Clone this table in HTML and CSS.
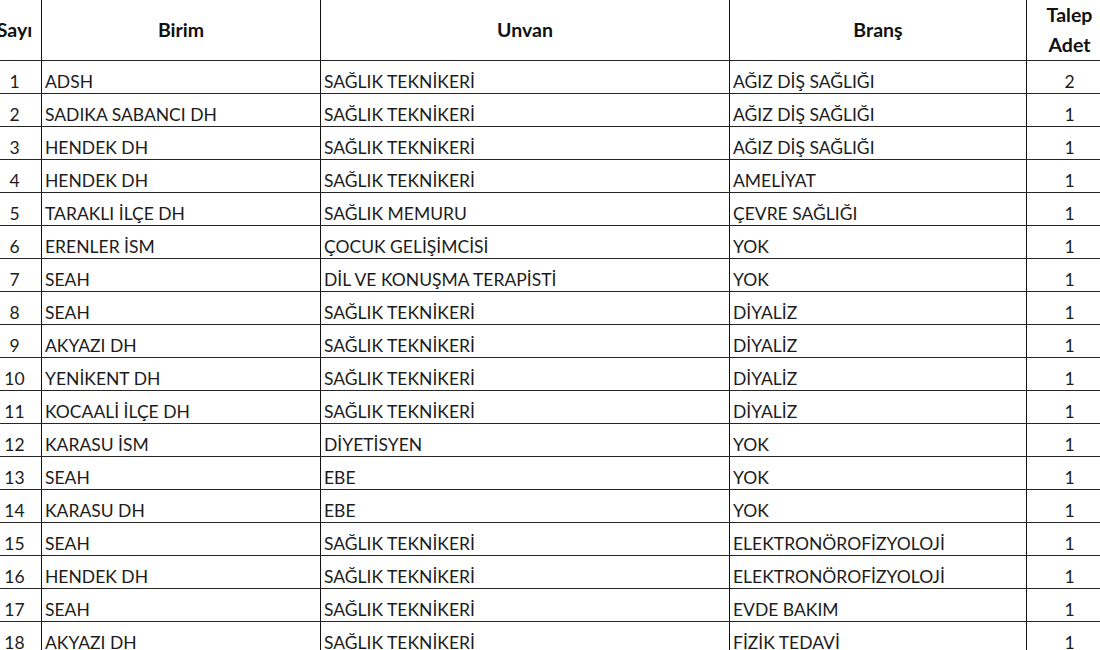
FILE: index.html
```html
<!DOCTYPE html>
<html lang="tr">
<head>
<meta charset="utf-8">
<title>Talep Listesi</title>
<link rel="stylesheet" href="styles.css">
</head>
<body>
<table class="sheet">
  <colgroup>
    <col class="c-no">
    <col class="c-birim">
    <col class="c-unvan">
    <col class="c-brans">
    <col class="c-adet">
  </colgroup>
  <thead>
    <tr class="head">
      <th>Sayı</th>
      <th>Birim</th>
      <th>Unvan</th>
      <th>Branş</th>
      <th>Talep<br>Adet</th>
    </tr>
  </thead>
  <tbody>
    <tr><td class="num">1</td><td>ADSH</td><td>SAĞLIK TEKNİKERİ</td><td>AĞIZ DİŞ SAĞLIĞI</td><td class="num">2</td></tr>
    <tr><td class="num">2</td><td>SADIKA SABANCI DH</td><td>SAĞLIK TEKNİKERİ</td><td>AĞIZ DİŞ SAĞLIĞI</td><td class="num">1</td></tr>
    <tr><td class="num">3</td><td>HENDEK DH</td><td>SAĞLIK TEKNİKERİ</td><td>AĞIZ DİŞ SAĞLIĞI</td><td class="num">1</td></tr>
    <tr><td class="num">4</td><td>HENDEK DH</td><td>SAĞLIK TEKNİKERİ</td><td>AMELİYAT</td><td class="num">1</td></tr>
    <tr><td class="num">5</td><td>TARAKLI İLÇE DH</td><td>SAĞLIK MEMURU</td><td>ÇEVRE SAĞLIĞI</td><td class="num">1</td></tr>
    <tr><td class="num">6</td><td>ERENLER İSM</td><td>ÇOCUK GELİŞİMCİSİ</td><td>YOK</td><td class="num">1</td></tr>
    <tr><td class="num">7</td><td>SEAH</td><td>DİL VE KONUŞMA TERAPİSTİ</td><td>YOK</td><td class="num">1</td></tr>
    <tr><td class="num">8</td><td>SEAH</td><td>SAĞLIK TEKNİKERİ</td><td>DİYALİZ</td><td class="num">1</td></tr>
    <tr><td class="num">9</td><td>AKYAZI DH</td><td>SAĞLIK TEKNİKERİ</td><td>DİYALİZ</td><td class="num">1</td></tr>
    <tr><td class="num">10</td><td>YENİKENT DH</td><td>SAĞLIK TEKNİKERİ</td><td>DİYALİZ</td><td class="num">1</td></tr>
    <tr><td class="num">11</td><td>KOCAALİ İLÇE DH</td><td>SAĞLIK TEKNİKERİ</td><td>DİYALİZ</td><td class="num">1</td></tr>
    <tr><td class="num">12</td><td>KARASU İSM</td><td>DİYETİSYEN</td><td>YOK</td><td class="num">1</td></tr>
    <tr><td class="num">13</td><td>SEAH</td><td>EBE</td><td>YOK</td><td class="num">1</td></tr>
    <tr><td class="num">14</td><td>KARASU DH</td><td>EBE</td><td>YOK</td><td class="num">1</td></tr>
    <tr><td class="num">15</td><td>SEAH</td><td>SAĞLIK TEKNİKERİ</td><td>ELEKTRONÖROFİZYOLOJİ</td><td class="num">1</td></tr>
    <tr><td class="num">16</td><td>HENDEK DH</td><td>SAĞLIK TEKNİKERİ</td><td>ELEKTRONÖROFİZYOLOJİ</td><td class="num">1</td></tr>
    <tr><td class="num">17</td><td>SEAH</td><td>SAĞLIK TEKNİKERİ</td><td>EVDE BAKIM</td><td class="num">1</td></tr>
    <tr><td class="num">18</td><td>AKYAZI DH</td><td>SAĞLIK TEKNİKERİ</td><td>FİZİK TEDAVİ</td><td class="num">1</td></tr>
  </tbody>
</table>
</body>
</html>
```

FILE: styles.css
```css
html, body {
  margin: 0;
  padding: 0;
  background: #ffffff;
  overflow: hidden;
}

body {
  font-family: Lato, "Liberation Sans", sans-serif;
  color: #1c1c1c;
}

.sheet {
  border-collapse: collapse;
  table-layout: fixed;
  width: 1125px;
  margin-left: -13px;
}

.c-no { width: 54px; }
.c-birim { width: 279px; }
.c-unvan { width: 409px; }
.c-brans { width: 297px; }
.c-adet { width: 86px; }

.sheet th,
.sheet td {
  border-left: 1px solid #111;
  border-right: 1px solid #111;
  border-bottom: 1px solid #262626;
  padding: 0;
  overflow: hidden;
  white-space: nowrap;
}

.head th {
  height: 60px;
  font-weight: bold;
  font-size: 19.5px;
  line-height: 30px;
  text-align: center;
  vertical-align: middle;
  color: #111;
}

.sheet td {
  height: 33px;
  box-sizing: border-box;
  font-size: 17.5px;
  line-height: 20px;
  vertical-align: bottom;
  padding: 0 0 1px 3px;
  text-align: left;
}

.sheet td.num {
  text-align: center;
  padding-left: 0;
}
```
